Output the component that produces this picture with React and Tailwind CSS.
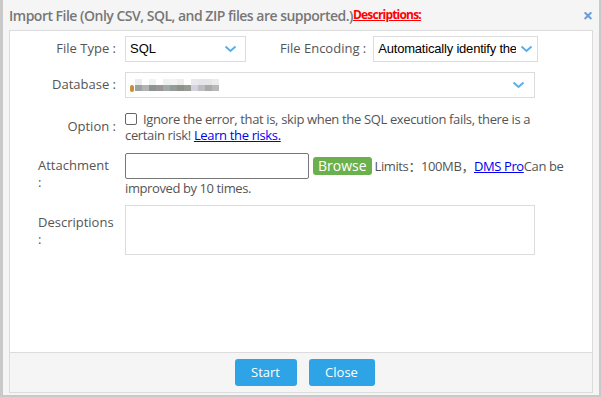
import React from 'react';

const Chevron = () => (
  <svg width="13" height="8" viewBox="0 0 13 8" className="shrink-0">
    <path d="M1.5 1.5 L6.5 6 L11.5 1.5" fill="none" stroke="#5aaee8" strokeWidth="2" />
  </svg>
);

const topBlocks = ['#ececec', '#ffffff', '#f2f2f2', '#ffffff', '#f0f0f0', '#f3f3f3', '#ededed', '#ffffff', '#e8e8ee', '#e6e6ea', '#e6e6e6', '#ececec'];
const bottomBlocks = ['#9aa3a0', '#b3b3b3', '#8c948f', '#9a9696', '#a0a8a8', '#939c98', '#8e928a', '#969c94', '#d4d0dc', '#bcbcc4', '#a8aca4', '#b8b8b8'];

const App = () => {
  const label = 'text-[13px] text-[#555] w-[87px] shrink-0';
  return (
    <div
      className="w-[601px] h-[397px] bg-[#f5f5f5] border-l-[3px] border-b-[2px] border-r-[2px] border-[#c9c9c9] flex flex-col"
      style={{ fontFamily: '"Open Sans", "Noto Sans", "Noto Sans CJK SC", sans-serif' }}
    >
      <div className="h-[30px] flex items-center pl-[6px] pr-[6px] shrink-0">
        <span className="text-[14px] font-semibold text-[#777] tracking-[-0.5px]">
          Import File (Only CSV, SQL, and ZIP files are supported.)
        </span>
        <a className="text-[12px] font-bold text-[#ff0000] underline tracking-[-0.8px]">Descriptions:</a>
        <span className="ml-auto text-[#6b9ad8] text-[18px] font-bold leading-none">×</span>
      </div>

      <div className="mx-[6px] h-[323px] bg-white border border-[#dcdcdc] pl-[28px] pt-[5px] shrink-0">
        <div className="flex items-center h-[26px]">
          <div className={`${label} text-right pr-[9px]`}>File Type :</div>
          <div className="w-[121px] h-[26px] border border-[#dcdcdc] flex items-center pl-[4px] pr-[8px]">
            <span className="text-[13px] text-black flex-1" style={{ fontFamily: '"Liberation Sans", Arial, sans-serif' }}>SQL</span>
            <Chevron />
          </div>
          <div className="ml-[34px] text-[13px] text-[#555]">File Encoding :</div>
          <div className="ml-[7px] w-[165px] h-[26px] border border-[#dcdcdc] flex items-center pl-[4px] pr-[4px] overflow-hidden">
            <span className="text-[13px] text-black flex-1 min-w-0 whitespace-nowrap overflow-hidden tracking-[-0.2px]" style={{ fontFamily: '"Liberation Sans", Arial, sans-serif' }}>Automatically identify the encoding</span>
            <span className="ml-[4px]"><Chevron /></span>
          </div>
        </div>

        <div className="flex items-center h-[26px] mt-[10px]">
          <div className={`${label} text-right pr-[9px]`}>Database :</div>
          <div className="w-[410px] h-[26px] border border-[#dcdcdc] flex items-center pl-[4px] pr-[9px]">
            <div className="flex-1 flex items-center">
              <span className="w-[4px] h-[7px] rounded-full bg-[#c89030] mt-[6px] mr-[1px]" />
              <div className="flex flex-col">
                <div className="flex">
                  {topBlocks.map((c, i) => (
                    <span key={i} className="w-[7px] h-[6px]" style={{ background: c }} />
                  ))}
                </div>
                <div className="flex">
                  {bottomBlocks.map((c, i) => (
                    <span key={i} className="w-[7px] h-[6px]" style={{ background: c }} />
                  ))}
                </div>
              </div>
            </div>
            <Chevron />
          </div>
        </div>

        <div className="flex mt-[13px]">
          <div className={`${label} text-right pr-[9px] pt-[6px]`}>Option :</div>
          <div className="w-[420px] text-[13px] text-[#555] leading-[16px] tracking-[-0.35px]">
            <span className="inline-block w-[12px] h-[12px] border border-[#666] rounded-[2px] align-[-1px] mr-[6px]" />
            Ignore the error, that is, skip when the SQL execution fails, there is a certain risk!{' '}
            <a className="text-[#0000ee] underline">Learn the risks.</a>
          </div>
        </div>

        <div className="flex mt-[10px]">
          <div className={`${label} text-left leading-[17px] pt-[4px]`}>Attachment<br />:</div>
          <div className="w-[445px] text-[13px] text-[#555] leading-[17px] tracking-[-0.4px]">
            <span className="inline-block w-[184px] h-[26px] border border-[#777] rounded-[2px] align-middle" />
            <span className="inline-block ml-[4px] px-[5px] h-[18px] leading-[18px] bg-[#6ab04c] text-white text-[14px] rounded-[3px] align-middle tracking-normal">Browse</span>
            <span className="ml-[3px] align-middle">Limits：100MB，</span>
            <a className="text-[#0000ee] underline align-middle">DMS Pro</a>
            <span className="align-middle">Can be improved by 10 times.</span>
          </div>
        </div>

        <div className="flex mt-[8px]">
          <div className={`${label} text-left leading-[17px] pt-[9px]`}>Descriptions<br />:</div>
          <div className="w-[410px] h-[50px] border border-[#dcdcdc]" />
        </div>
      </div>

      <div className="mx-[6px] h-[40px] bg-[#f5f5f5] border border-t-0 border-[#dcdcdc] flex items-center justify-center gap-[12px] pl-[7px] shrink-0">
        <button className="w-[62px] h-[27px] rounded-[3px] bg-[#2ea3e6] text-white text-[13px]">Start</button>
        <button className="w-[66px] h-[27px] rounded-[3px] bg-[#2ea3e6] text-white text-[13px]">Close</button>
      </div>
    </div>
  );
};

export default App;
